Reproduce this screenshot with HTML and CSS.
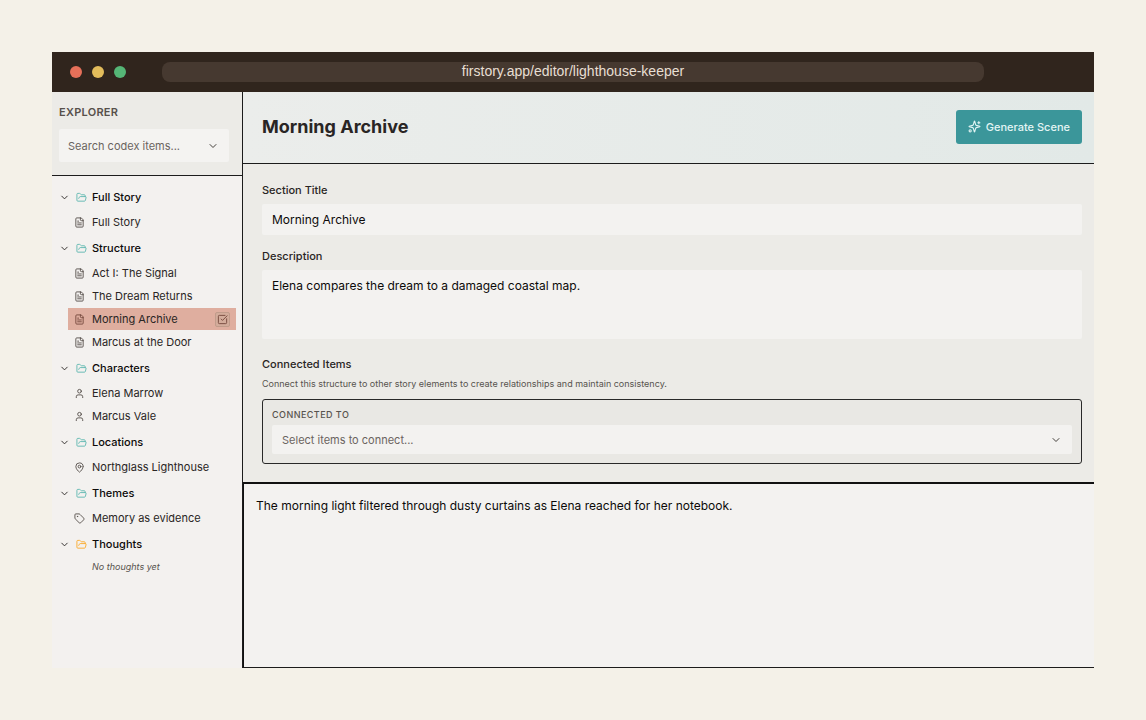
FILE: index.html
```
<!DOCTYPE html>
<html lang="en">
<head>
    <meta charset="UTF-8">
    <meta name="viewport" content="width=device-width, initial-scale=1.0">
    <title>Firstory Editor</title>
    <link rel="stylesheet" href="styles.css">
</head>
<body>

<!-- shared icons -->
<svg class="sprite" aria-hidden="true">
    <symbol id="chevron" viewBox="0 0 24 24"><path d="m6 9 6 6 6-6"/></symbol>
    <symbol id="folder" viewBox="0 0 24 24"><path d="m6 14 1.5-2.9A2 2 0 0 1 9.24 10H20a2 2 0 0 1 1.94 2.5l-1.54 6a2 2 0 0 1-1.95 1.5H4a2 2 0 0 1-2-2V5a2 2 0 0 1 2-2h3.9a2 2 0 0 1 1.69.9l.81 1.2a2 2 0 0 0 1.67.9H18a2 2 0 0 1 2 2v2"/></symbol>
    <symbol id="file" viewBox="0 0 24 24"><path d="M15 2H6a2 2 0 0 0-2 2v16a2 2 0 0 0 2 2h12a2 2 0 0 0 2-2V7Z"/><path d="M14 2v4a2 2 0 0 0 2 2h4M10 9H8M16 13H8M16 17H8"/></symbol>
    <symbol id="person" viewBox="0 0 24 24"><circle cx="12" cy="7" r="4"/><path d="M19 21v-2a4 4 0 0 0-4-4H9a4 4 0 0 0-4 4v2"/></symbol>
    <symbol id="pin" viewBox="0 0 24 24"><path d="M20 10c0 5-5.54 10.19-7.4 11.8a1 1 0 0 1-1.2 0C9.54 20.19 4 15 4 10a8 8 0 0 1 16 0"/><circle cx="12" cy="10" r="3"/></symbol>
    <symbol id="tag" viewBox="0 0 24 24"><path d="M12.59 2.59A2 2 0 0 0 11.17 2H4a2 2 0 0 0-2 2v7.17a2 2 0 0 0 .59 1.42l8.7 8.7a2.43 2.43 0 0 0 3.42 0l6.58-6.58a2.43 2.43 0 0 0 0-3.42z"/><circle cx="7.5" cy="7.5" r=".5"/></symbol>
    <symbol id="check" viewBox="0 0 24 24"><path d="M21 10.5V19a2 2 0 0 1-2 2H5a2 2 0 0 1-2-2V5a2 2 0 0 1 2-2h12.5"/><path d="m9 11 3 3L22 4"/></symbol>
    <symbol id="sparkles" viewBox="0 0 24 24"><path d="M9.94 15.5A2 2 0 0 0 8.5 14.06l-6.14-1.58a.5.5 0 0 1 0-.96L8.5 9.94A2 2 0 0 0 9.94 8.5l1.58-6.14a.5.5 0 0 1 .96 0l1.58 6.14a2 2 0 0 0 1.44 1.44l6.14 1.58a.5.5 0 0 1 0 .96l-6.14 1.58a2 2 0 0 0-1.44 1.44l-1.58 6.14a.5.5 0 0 1-.96 0z"/><path d="M20 3v4M22 5h-4"/><circle cx="4" cy="20" r="2"/></symbol>
</svg>

<div class="window">
    <div class="titlebar">
        <div class="dots">
            <span class="dot red"></span>
            <span class="dot yellow"></span>
            <span class="dot green"></span>
        </div>
        <div class="address">firstory.app/editor/lighthouse-keeper</div>
    </div>

    <div class="app">
        <aside class="sidebar">
            <div class="explorer">
                <h2>EXPLORER</h2>
                <div class="field">
                    <input class="search" type="text" placeholder="Search codex items..." aria-label="Search codex items">
                    <svg class="icon field-arrow"><use href="#chevron"/></svg>
                </div>
            </div>

            <nav class="tree">
                <section class="group">
                    <button class="group-title"><svg class="icon arrow"><use href="#chevron"/></svg><svg class="icon folder"><use href="#folder"/></svg>Full Story</button>
                    <a class="item" href="#"><svg class="icon"><use href="#file"/></svg>Full Story</a>
                </section>
                <section class="group">
                    <button class="group-title"><svg class="icon arrow"><use href="#chevron"/></svg><svg class="icon folder"><use href="#folder"/></svg>Structure</button>
                    <a class="item" href="#"><svg class="icon"><use href="#file"/></svg>Act I: The Signal</a>
                    <a class="item" href="#"><svg class="icon"><use href="#file"/></svg>The Dream Returns</a>
                    <a class="item active" href="#"><svg class="icon"><use href="#file"/></svg>Morning Archive<span class="mark"><svg class="icon"><use href="#check"/></svg></span></a>
                    <a class="item" href="#"><svg class="icon"><use href="#file"/></svg>Marcus at the Door</a>
                </section>
                <section class="group">
                    <button class="group-title"><svg class="icon arrow"><use href="#chevron"/></svg><svg class="icon folder"><use href="#folder"/></svg>Characters</button>
                    <a class="item" href="#"><svg class="icon"><use href="#person"/></svg>Elena Marrow</a>
                    <a class="item" href="#"><svg class="icon"><use href="#person"/></svg>Marcus Vale</a>
                </section>
                <section class="group">
                    <button class="group-title"><svg class="icon arrow"><use href="#chevron"/></svg><svg class="icon folder"><use href="#folder"/></svg>Locations</button>
                    <a class="item" href="#"><svg class="icon"><use href="#pin"/></svg>Northglass Lighthouse</a>
                </section>
                <section class="group">
                    <button class="group-title"><svg class="icon arrow"><use href="#chevron"/></svg><svg class="icon folder"><use href="#folder"/></svg>Themes</button>
                    <a class="item" href="#"><svg class="icon"><use href="#tag"/></svg>Memory as evidence</a>
                </section>
                <section class="group">
                    <button class="group-title"><svg class="icon arrow"><use href="#chevron"/></svg><svg class="icon folder thoughts"><use href="#folder"/></svg>Thoughts</button>
                    <p class="empty">No thoughts yet</p>
                </section>
            </nav>
        </aside>

        <main class="main">
            <header class="header">
                <h1>Morning Archive</h1>
                <button class="generate"><svg class="icon"><use href="#sparkles"/></svg>Generate Scene</button>
            </header>

            <form class="form">
                <label for="sectionTitle">Section Title</label>
                <input class="text-input" type="text" id="sectionTitle" value="Morning Archive">

                <label for="description">Description</label>
                <textarea class="text-input" id="description">Elena compares the dream to a damaged coastal map.</textarea>

                <h3>Connected Items</h3>
                <p class="hint">Connect this structure to other story elements to create relationships and maintain consistency.</p>
                <div class="connected">
                    <label for="connectedTo">CONNECTED TO</label>
                    <div class="field">
                        <select id="connectedTo">
                            <option>Select items to connect...</option>
                        </select>
                        <svg class="icon field-arrow"><use href="#chevron"/></svg>
                    </div>
                </div>
            </form>

            <textarea class="editor" aria-label="Scene text">The morning light filtered through dusty curtains as Elena reached for her notebook.</textarea>
        </main>
    </div>
</div>

</body>
</html>
```
FILE: styles.css
```
* { box-sizing: border-box; }
body {
    font-family: Inter, sans-serif;
    font-size: 11px;
    background: #f4f1e8;
    color: #292524;
    margin: 0;
    padding: 52px;
    min-height: 100vh;
    display: flex;
}
h1, h2, h3, p { margin: 0; }
button, input, select, textarea {
    font-family: inherit;
    font-size: inherit;
    color: inherit;
    border: none;
    border-radius: 0;
    margin: 0;
}
button { cursor: pointer; }
.sprite { display: none; }
.icon {
    width: 11px;
    height: 11px;
    flex: none;
    fill: none;
    stroke: currentColor;
    stroke-width: 2;
    stroke-linecap: round;
    stroke-linejoin: round;
}
.window {
    flex: 1;
    min-width: 0;
    display: flex;
    flex-direction: column;
}

/* browser bar */
.titlebar {
    height: 40px;
    background: #30251d;
    display: flex;
    align-items: center;
    gap: 36px;
    padding: 0 110px 0 18px;
}
.dots { display: flex; gap: 10px; }
.dot {
    width: 12px;
    height: 12px;
    border-radius: 50%;
}
.red { background: #e67059; }
.yellow { background: #e2bc5b; }
.green { background: #55b676; }
.address {
    flex: 1;
    height: 20px;
    line-height: 18px;
    border-radius: 8px;
    background: #463930;
    color: #e8dfd3;
    font-family: "Liberation Sans", Arial, sans-serif;
    font-size: 14px;
    text-align: center;
}

.app { flex: 1; display: flex; }

/* sidebar */
.sidebar {
    width: 191px;
    flex: none;
    background: #f3f1ef;
    border-right: 1px solid #1c1c1c;
}
.explorer {
    height: 84px;
    padding: 12px 13px 0 7px;
    background: #ecebe7;
    border-bottom: 1px solid #1c1c1c;
}
.explorer h2 {
    font-size: 11px;
    line-height: 16px;
    font-weight: 600;
    letter-spacing: 0.025em;
    color: #57504b;
    margin-bottom: 9px;
}
.field { position: relative; }
.field-arrow {
    position: absolute;
    top: 50%;
    right: 10px;
    width: 12px;
    height: 12px;
    transform: translateY(-50%);
    color: #44403c;
    pointer-events: none;
}
.search {
    display: block;
    width: 100%;
    height: 33px;
    padding: 0 28px 0 9px;
    background: #f4f3f1;
    border-radius: 2px;
}
.search::placeholder { color: #6b645f; opacity: 1; }
.tree {
    padding: 9px 6px 0 7px;
    display: flex;
    flex-direction: column;
    gap: 3px;
}
.group {
    display: flex;
    flex-direction: column;
    gap: 1px;
}
.group-title {
    height: 24px;
    margin-bottom: 1px;
    padding: 0;
    display: flex;
    align-items: center;
    background: none;
    font-weight: 500;
    color: #0c0a09;
}
.arrow { margin-right: 6px; color: #292524; }
.folder { margin-right: 5px; color: #5fb8b0; }
.thoughts { color: #fbab2c; }
.item {
    height: 22px;
    margin-left: 9px;
    padding: 0 6px;
    display: flex;
    align-items: center;
    gap: 7px;
    color: #292524;
    text-decoration: none;
}
.item .icon { color: #57504b; }
.active { background: #dfae9f; }
.mark {
    width: 15px;
    height: 15px;
    margin-left: auto;
    display: flex;
    align-items: center;
    justify-content: center;
    background: #d3ac9b;
    border: 1px solid #c19c8b;
    border-radius: 2px;
}
.item.active .icon { color: #75483c; }
.empty {
    padding-left: 33px;
    font-size: 9px;
    line-height: 18px;
    font-style: italic;
    color: #57534e;
}

/* main panel */
.main {
    flex: 1;
    min-width: 0;
    display: flex;
    flex-direction: column;
    background: #ecebe7;
}
.header {
    height: 72px;
    padding: 0 12px 2px 19px;
    display: flex;
    align-items: center;
    justify-content: space-between;
    background: linear-gradient(90deg, #ebedeb, #e2e9e7);
    border-bottom: 1px solid #1c1c1c;
}
h1 {
    font-size: 18px;
    line-height: 24px;
    font-weight: 700;
}
.generate {
    height: 34px;
    padding: 0 12px;
    display: flex;
    align-items: center;
    gap: 5px;
    background: #3b969a;
    border-radius: 3px;
    color: #e3f5f4;
    font-weight: 500;
}
.generate .icon { width: 13px; height: 13px; }
.form {
    padding: 18px 12px 18px 19px;
    display: flex;
    flex-direction: column;
}
.form label, h3 {
    font-size: 11px;
    line-height: 16px;
    font-weight: 500;
}
.text-input {
    height: 31px;
    margin: 6px 0 13px;
    padding: 0 10px;
    background: #f3f2f0;
    border-radius: 2px;
    font-size: 12px;
    color: #0c0a09;
}
textarea { resize: none; }
textarea.text-input {
    height: 69px;
    margin-bottom: 17px;
    padding: 6px 10px;
    line-height: 20px;
}
.hint {
    margin: 4px 0 8px;
    font-size: 9px;
    line-height: 15px;
    color: #57534e;
}
.connected {
    height: 65px;
    padding: 7px 9px 8px;
    border: 1px solid #292929;
    border-radius: 3px;
    background: #e9e8e4;
    display: flex;
    flex-direction: column;
    gap: 2px;
}
.form .connected label {
    font-size: 9px;
    letter-spacing: 0.05em;
    color: #57534e;
}
select {
    display: block;
    width: 100%;
    height: 29px;
    padding: 0 28px 0 10px;
    appearance: none;
    background: #f3f2f0;
    border-radius: 2px;
    font-size: 11px;
    color: #6b645f;
}
.editor {
    flex: 1;
    width: 100%;
    padding: 12px;
    border-top: 2px solid #111111;
    border-left: 1px solid #111111;
    border-bottom: 1px solid #1c1c1c;
    background: #f3f2f0;
    font-size: 12px;
    line-height: 20px;
    color: #0c0a09;
}
```
